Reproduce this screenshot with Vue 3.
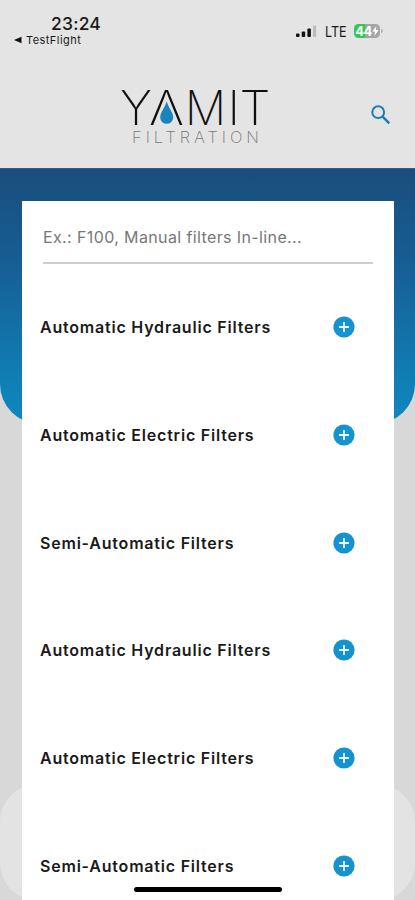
<script setup>
const filters = [
  'Automatic Hydraulic Filters',
  'Automatic Electric Filters',
  'Semi-Automatic Filters',
  'Automatic Hydraulic Filters',
  'Automatic Electric Filters',
  'Semi-Automatic Filters',
]
const logoLetters = [
  { glyph: 'Y', x: 120, width: 32 },
  { glyph: 'Λ', x: 149, width: 35 },
  { glyph: 'M', x: 185, width: 41 },
  { glyph: 'I', x: 227.5, width: 12.5 },
  { glyph: 'T', x: 239.5, width: 31 },
]
</script>

<template>
  <div class="screen">
    <header class="header">
      <div class="status">
        <div class="clock">
          <div class="time">23:24</div>
          <div class="back">
            <svg width="8" height="8" viewBox="0 0 8 8"><path d="M0 4L7.5 .8V7.2Z" fill="#111" /></svg>
            <span>TestFlight</span>
          </div>
        </div>
        <div class="signals">
          <svg width="21" height="13" viewBox="0 0 21 13">
            <rect x="0" y="8.5" width="3.5" height="3.5" rx="1" fill="#111" />
            <rect x="5.7" y="6.5" width="3.5" height="5.5" rx="1" fill="#111" />
            <rect x="11.4" y="3.5" width="3.5" height="8.5" rx="1" fill="#111" />
            <rect x="17" y=".5" width="3.2" height="11.5" rx="1" fill="#bcbcbc" />
          </svg>
          <span class="lte">LTE</span>
          <div class="battery">
            <span>44</span>
            <svg width="7" height="10" viewBox="0 0 7 10"><path d="M4.3 0L.3 5.6H3L2.4 10L6.7 4.1H4Z" fill="#fff" /></svg>
          </div>
          <i class="battery-tip"></i>
        </div>
      </div>
      <div class="brand">
        <svg class="logo" width="415" height="80" viewBox="0 78 415 80">
          <text
            v-for="letter in logoLetters"
            :key="letter.glyph"
            class="logo-name"
            :x="letter.x"
            y="124.5"
            :textLength="letter.width"
            lengthAdjust="spacingAndGlyphs"
          >{{ letter.glyph }}</text>
          <path d="M166.7 101C167.8 107 173.2 112 173.2 117.3A6.5 6.5 0 0 1 160.2 117.3C160.2 112 165.6 107 166.7 101Z" fill="#1784bd" />
          <text class="logo-sub" x="132" y="142.5" textLength="127">FILTRATION</text>
        </svg>
        <svg class="search" width="20" height="20" viewBox="0 0 20 20" fill="none" stroke="#1b7db3">
          <circle cx="7.2" cy="7.2" r="5.9" stroke-width="2" />
          <path d="M11.6 11.6L18.3 18.3" stroke-width="2.4" />
        </svg>
      </div>
    </header>
    <main class="content">
      <div class="banner"></div>
      <div class="lower-panel"></div>
      <section class="card">
        <div class="field">Ex.: F100, Manual filters In-line...</div>
        <ul class="list">
          <li v-for="(name, index) in filters" :key="index" class="row">
            <span>{{ name }}</span>
            <svg width="22" height="22" viewBox="0 0 22 22">
              <circle cx="11" cy="11" r="10.6" fill="#1592d0" />
              <path d="M11 6V16M6 11H16" stroke="#e8f5fb" stroke-width="1.8" />
            </svg>
          </li>
        </ul>
      </section>
    </main>
    <div class="home-bar"></div>
  </div>
</template>

<style>
body {
  margin: 0;
}
</style>

<style scoped>
.screen {
  position: relative;
  display: flex;
  flex-direction: column;
  width: 415px;
  height: 900px;
  overflow: hidden;
  background: #d8d8d8;
  font-family: Inter, "Liberation Sans", sans-serif;
  color: #1a1a1a;
}
.header {
  height: 168px;
  flex: none;
  background: #e4e4e4;
}
.status {
  display: flex;
  justify-content: space-between;
  height: 78px;
}
.clock {
  padding: 13px 0 0 14px;
}
.time {
  padding-left: 37px;
  font-size: 17.5px;
  line-height: 21px;
  font-weight: 500;
  letter-spacing: 0.2px;
}
.back {
  display: flex;
  align-items: center;
  gap: 4px;
  font-size: 11px;
  line-height: 12px;
  letter-spacing: 0.45px;
}
.signals {
  display: flex;
  align-items: center;
  height: 20px;
  padding: 21px 32.5px 0 0;
}
.lte {
  margin: 0 5px 0 8px;
  font-size: 14px;
  transform: scaleX(0.9);
  transform-origin: left;
}
.battery {
  display: flex;
  align-items: center;
  justify-content: center;
  width: 26px;
  height: 14px;
  border-radius: 4.5px;
  background: linear-gradient(90deg, #2fc953 44%, #a5a5a5 44%);
  color: #fff;
  font-size: 13px;
  font-weight: 700;
  letter-spacing: -0.5px;
}
.battery-tip {
  width: 1.5px;
  height: 4px;
  margin-left: 1px;
  border-radius: 0 2px 2px 0;
  background: #b5b5b5;
}
.brand {
  position: relative;
  height: 80px;
}
.logo {
  display: block;
}
.logo-name {
  font-size: 48px;
  font-weight: 200;
  fill: #111;
}
.logo-sub {
  font-size: 16.5px;
  font-weight: 200;
  fill: #777;
}
.search {
  position: absolute;
  left: 371px;
  top: 27px;
}
.content {
  position: relative;
  flex: 1;
  padding: 33px 21px 0 22px;
}
.banner {
  position: absolute;
  left: 0;
  right: 0;
  top: 0;
  height: 256px;
  border-top: 1px solid #305f8a;
  box-sizing: border-box;
  border-radius: 0 0 40px 40px;
  background: linear-gradient(#194e7d, #175c92 34%, #0f82b8 88%, #0e88bf);
}
.lower-panel {
  position: absolute;
  left: 0;
  right: 0;
  top: 616px;
  height: 117px;
  border-radius: 38px;
  background: #e3e3e3;
}
.card {
  position: relative;
  height: 699px;
  background: #fff;
}
.field {
  height: 61px;
  margin: 0 21px;
  border-bottom: 2px solid #cfcfcf;
  font-size: 16px;
  line-height: 73px;
  letter-spacing: 0.38px;
  color: #777;
}
.list {
  list-style: none;
  margin: 9.5px 0 0;
  padding: 0;
}
.row {
  display: flex;
  align-items: center;
  justify-content: space-between;
  height: 107.7px;
  padding: 0 39px 0 18px;
  font-size: 16px;
  font-weight: 600;
  letter-spacing: 0.79px;
}
.home-bar {
  position: absolute;
  left: 134px;
  top: 887px;
  width: 148px;
  height: 5px;
  border-radius: 3px;
  background: #000;
}
</style>
